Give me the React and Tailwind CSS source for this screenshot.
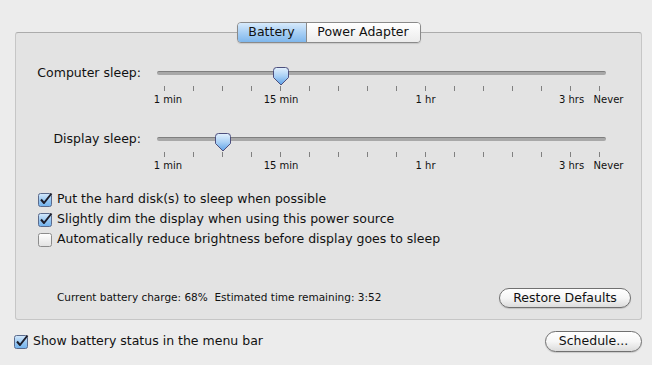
import React from 'react';

const ticks = Array.from({ length: 16 }, (_, i) => i);
const labels = {
  0: { text: '1 min', cls: 'ml-[7px]' },
  4: { text: '15 min', cls: 'ml-px' },
  9: { text: '1 hr', cls: '' },
  14: { text: '3 hrs', cls: 'ml-[2px]' },
  15: { text: 'Never', cls: 'ml-[18px]' },
};

function Thumb() {
  return (
    <svg width="16" height="19" viewBox="0 0 16 19">
      <defs>
        <linearGradient id="thumbFill" x1="0" y1="0" x2="0" y2="1">
          <stop offset="0" stopColor="#e4f1fd" />
          <stop offset="0.5" stopColor="#a9d0f5" />
          <stop offset="1" stopColor="#5b9fe6" />
        </linearGradient>
      </defs>
      <path
        d="M3.5 0.5 H12.5 Q15.5 0.5 15.5 3.5 V10.5 L8 18 L0.5 10.5 V3.5 Q0.5 0.5 3.5 0.5 Z"
        fill="url(#thumbFill)"
        stroke="#4d4f7d"
      />
    </svg>
  );
}

function Slider({ label, value }) {
  return (
    <div className="flex">
      <div className="w-[125px] text-right text-[12.5px] leading-[16px] -mt-px">{label}</div>
      <div className="ml-4 w-[449px]">
        <div className="relative h-[20px] pt-[5px]">
          <div className="h-[4px] rounded-full bg-[#a8a8a8] border-t border-[#7f7f7f]"></div>
          {/* thumb sits on the track at the tick for value */}
          <div className="absolute top-[1px] leading-none" style={{ left: 7 + 29 * value - 7.5 }}>
            <Thumb />
          </div>
        </div>
        <div className="-ml-[7px] grid grid-cols-[repeat(16,29px)]">
          {ticks.map((t) => (
            <div key={t} className="flex flex-col items-center">
              <div className="w-px h-[5px] bg-[#808080]"></div>
              <div className="mt-[3px] h-[12px] flex justify-center whitespace-nowrap text-[10px] leading-[12px]">
                {labels[t] ? <span className={labels[t].cls}>{labels[t].text}</span> : ''}
              </div>
            </div>
          ))}
        </div>
      </div>
    </div>
  );
}

function Checkbox({ checked }) {
  return (
    <svg width="15" height="15" viewBox="0 0 15 15" className="shrink-0">
      <defs>
        <linearGradient id="cbOn" x1="0" y1="0" x2="0" y2="1">
          <stop offset="0" stopColor="#d6e9fb" />
          <stop offset="0.5" stopColor="#9ccaf3" />
          <stop offset="1" stopColor="#6fb0ec" />
        </linearGradient>
        <linearGradient id="cbOff" x1="0" y1="0" x2="0" y2="1">
          <stop offset="0" stopColor="#ffffff" />
          <stop offset="1" stopColor="#e2e2e2" />
        </linearGradient>
      </defs>
      <rect x="0.5" y="1.5" width="13" height="13" rx="2" fill={checked ? 'url(#cbOn)' : 'url(#cbOff)'} stroke={checked ? '#5a6a8c' : '#8c8c8c'} />
      {checked && (
        <path d="M3 7.5 L6 11 L13.5 1.5" fill="none" stroke="#1d1d2a" strokeWidth="2" strokeLinejoin="round" />
      )}
    </svg>
  );
}

function Option({ checked, children }) {
  return (
    <div className="flex items-center h-[20px]">
      <Checkbox checked={checked} />
      <span className="ml-[4px] text-[12.5px]">{children}</span>
    </div>
  );
}

function PillButton({ children, className }) {
  return (
    <button className={`flex items-center justify-center rounded-full border border-[#707070] bg-gradient-to-b from-white via-[#f6f6f6] to-[#dcdcdc] shadow-[0_1px_1px_rgba(0,0,0,0.15)] text-[12.5px] leading-none ${className}`}>
      {children}
    </button>
  );
}

export default function App() {
  return (
    <div className="w-[652px] h-[365px] bg-[#ececec] text-[#111] font-['DejaVu_Sans',sans-serif] pt-[22px] pl-[15px] pr-[10px] overflow-hidden">
      {/* tabs */}
      <div className="relative z-10 mx-auto flex w-[184px] h-[21px] rounded-[4px] border border-[#8a8a8a] overflow-hidden shadow-[0_1px_1px_rgba(0,0,0,0.12)]">
        <div className="w-[69px] flex items-center justify-center bg-gradient-to-b from-[#d7eafb] via-[#a8cff4] to-[#7fb7ec] border-r border-[#8a8a8a] text-[12.5px]">Battery</div>
        <div className="flex-1 flex items-center justify-center bg-gradient-to-b from-white to-[#ececec] text-[12.5px]">Power Adapter</div>
      </div>

      {/* panel */}
      <div className="-mt-[11px] h-[288px] rounded-[3px] border border-[#c6c6c6] border-t-[#ababab] bg-[#e3e3e3] pt-[33px] flex flex-col">
        <Slider label="Computer sleep:" value={4} />
        <div className="mt-[26px]">
          <Slider label="Display sleep:" value={2} />
        </div>

        <div className="mt-[17px] pl-[22px]">
          <Option checked>Put the hard disk(s) to sleep when possible</Option>
          <Option checked>Slightly dim the display when using this power source</Option>
          <Option>Automatically reduce brightness before display goes to sleep</Option>
        </div>

        <div className="mt-[39px] flex items-center pl-[41px] pr-[10px]">
          <span className="text-[10.5px]">Current battery charge: 68%&nbsp;&nbsp;Estimated time remaining: 3:52</span>
          <PillButton className="ml-auto w-[132px] h-[20px]">Restore Defaults</PillButton>
        </div>
      </div>

      {/* bottom */}
      <div className="mt-[11px] -ml-px flex items-center">
        <Option checked>Show battery status in the menu bar</Option>
        <PillButton className="ml-auto w-[97px] h-[21px]">Schedule...</PillButton>
      </div>
    </div>
  );
}
